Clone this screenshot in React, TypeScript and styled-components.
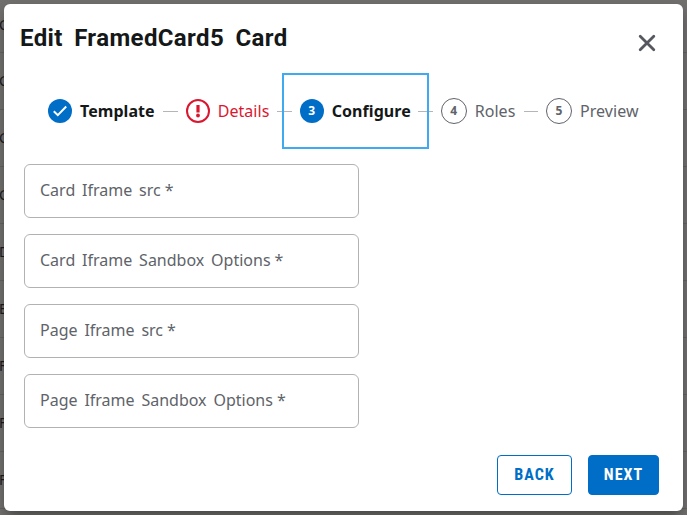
import React from "react";
import styled, { createGlobalStyle, css } from "styled-components";

const GlobalStyle = createGlobalStyle`
  *, *::before, *::after { box-sizing: border-box; }
  body { margin: 0; overflow: hidden; font-family: "Noto Sans", sans-serif; }
`;

const Page = styled.div`
  position: relative;
  width: 687px;
  height: 515px;
  overflow: hidden;
  background: #71706f;
`;

const TableRow = styled.div<{ $first?: boolean }>`
  display: flex;
  align-items: center;
  height: ${(p) => (p.$first ? 53 : 57)}px;
  padding-bottom: ${(p) => (p.$first ? 3 : 1)}px;
  border-bottom: 1px solid #626262;
  font-size: 14px;
  line-height: 20px;
  color: #1c1c1d;
  text-indent: -1px;
`;

const Dialog = styled.section`
  position: absolute;
  inset: 4px;
  display: flex;
  flex-direction: column;
  border-radius: 6px;
  background: #fff;
  box-shadow: 0 8px 12px -3px rgba(0, 0, 0, 0.3), 0 3px 16px rgba(0, 0, 0, 0.12);
`;

const Header = styled.header`
  display: flex;
  justify-content: space-between;
  height: 69px;
  padding: 18px 26px 0 16px;
`;

const Title = styled.h1`
  margin: 0;
  font: 700 24px/32px Roboto, sans-serif;
  letter-spacing: 0.38px;
  word-spacing: 5px;
  white-space: nowrap;
  color: #151818;
`;

const CloseButton = styled.button`
  display: flex;
  width: 20px;
  height: 20px;
  margin-top: 11px;
  padding: 0;
  border: 0;
  background: none;
`;

const Steps = styled.div`
  position: relative;
  display: flex;
  align-items: center;
  gap: 8px;
  height: 76px;
  padding: 0 44px;
`;

const Connector = styled.span`
  flex: 1 1 0;
  height: 1px;
  background: #b4b5b8;
`;

type StepState = "done" | "error" | "current" | "todo";

const Step = styled.div`
  display: flex;
  align-items: center;
  gap: 8px;
`;

const StepBadge = styled.span<{ $state: StepState }>`
  display: flex;
  align-items: center;
  justify-content: center;
  width: 24px;
  height: 24px;
  border-radius: 50%;
  font-size: 12px;
  font-weight: 700;
  line-height: 16px;
  color: #fff;
  background: ${(p) => (p.$state === "error" ? "none" : "#006dc7")};
  ${(p) =>
    p.$state === "todo" &&
    css`
      width: 26px;
      height: 26px;
      border: 1px solid #606369;
      color: #606369;
      background: none;
    `}
`;

const StepLabel = styled.span<{ $state: StepState; $width: number }>`
  width: ${(p) => p.$width}px;
  font-size: 16px;
  line-height: 24px;
  letter-spacing: 0.06px;
  white-space: nowrap;
  font-weight: ${(p) => (p.$state === "done" || p.$state === "current" ? 700 : 400)};
  color: ${(p) => (p.$state === "error" ? "#da1730" : p.$state === "todo" ? "#606369" : "#151818")};
`;

const FocusFrame = styled.span`
  position: absolute;
  top: 0;
  left: 278px;
  width: 147px;
  height: 76px;
  border: 2px solid #40aaf0;
  pointer-events: none;
`;

const Fields = styled.div`
  display: flex;
  flex-direction: column;
  gap: 16px;
  padding: 15px 20px 0;
`;

const Field = styled.label`
  display: flex;
  align-items: center;
  gap: 4px;
  width: 335px;
  height: 54px;
  padding: 0 15px 2px;
  border: 1px solid #b0b2b4;
  border-radius: 6px;
  font-size: 16px;
  line-height: 24px;
  word-spacing: 2.7px;
  white-space: nowrap;
  color: #606369;
`;

const Footer = styled.footer`
  display: flex;
  justify-content: flex-end;
  gap: 16px;
  margin-top: auto;
  padding: 0 24px 16px;
`;

const ActionButton = styled.button<{ $primary?: boolean; $width: number }>`
  width: ${(p) => p.$width}px;
  height: 40px;
  padding: 0;
  border: 1px solid #006dc7;
  border-radius: 4px;
  font: 700 16px/24px Roboto, sans-serif;
  font-stretch: 75%;
  letter-spacing: 1px;
  color: ${(p) => (p.$primary ? "#fff" : "#006dc7")};
  background: ${(p) => (p.$primary ? "#006dc7" : "#fff")};
`;

const rows = ["C", "C", "C", "C", "D", "E", "F", "F", "F"];

const steps: { label: string; state: StepState; width: number }[] = [
  { label: "Template", state: "done", width: 75.3 },
  { label: "Details", state: "error", width: 51.7 },
  { label: "Configure", state: "current", width: 78.6 },
  { label: "Roles", state: "todo", width: 41 },
  { label: "Preview", state: "todo", width: 59 },
];

const fields = ["Card Iframe src", "Card Iframe Sandbox Options", "Page Iframe src", "Page Iframe Sandbox Options"];

function BadgeContent({ state, number }: { state: StepState; number: number }) {
  if (state === "done") {
    return (
      <svg width="24" height="24" viewBox="0 0 24 24" fill="none" stroke="#fff" strokeWidth="2">
        <path d="M5.8 12.2 9.8 16.1 18.2 7.5" />
      </svg>
    );
  }
  if (state === "error") {
    return (
      <svg width="24" height="24" viewBox="0 0 24 24" fill="none" stroke="#da1730">
        <circle cx="12" cy="12" r="11" strokeWidth="2" />
        <path d="M12 6v7.5" strokeWidth="3.2" />
        <circle cx="12" cy="16.5" r="1.9" fill="#da1730" stroke="none" />
      </svg>
    );
  }
  return <>{number}</>;
}

export default function App() {
  return (
    <Page>
      <GlobalStyle />
      {rows.map((text, i) => (
        <TableRow key={i} $first={i === 0}>{text}</TableRow>
      ))}
      <Dialog role="dialog" aria-label="Edit FramedCard5 Card">
        <Header>
          <Title>Edit FramedCard5 Card</Title>
          <CloseButton aria-label="Close">
            <svg width="20" height="20" viewBox="0 0 20 20" stroke="#55585f" strokeWidth="2.8" strokeLinecap="round">
              <path d="M3.2 3.2 16.8 16.8M16.8 3.2 3.2 16.8" />
            </svg>
          </CloseButton>
        </Header>
        <Steps>
          {steps.map((step, i) => (
            <React.Fragment key={step.label}>
              {i > 0 && <Connector />}
              <Step>
                <StepBadge $state={step.state}>
                  <BadgeContent state={step.state} number={i + 1} />
                </StepBadge>
                <StepLabel $state={step.state} $width={step.width}>{step.label}</StepLabel>
              </Step>
            </React.Fragment>
          ))}
          <FocusFrame />
        </Steps>
        <Fields>
          {fields.map((label) => (
            <Field key={label}>
              <span>{label}</span>
              <span>*</span>
            </Field>
          ))}
        </Fields>
        <Footer>
          <ActionButton $width={75}>BACK</ActionButton>
          <ActionButton $primary $width={71}>NEXT</ActionButton>
        </Footer>
      </Dialog>
    </Page>
  );
}
